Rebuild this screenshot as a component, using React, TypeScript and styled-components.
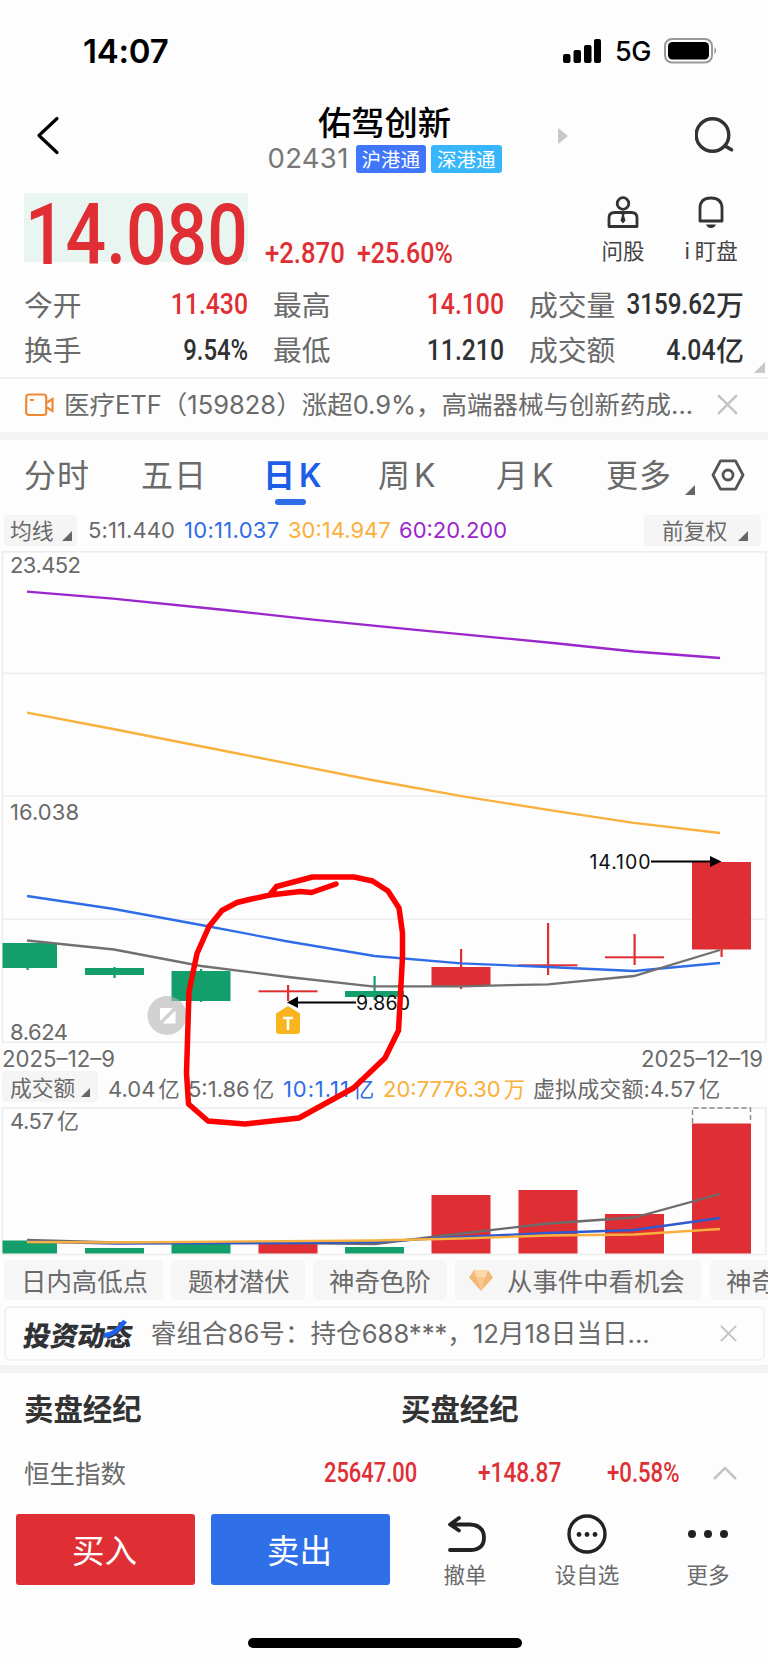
import React from "react";
import styled, { createGlobalStyle } from "styled-components";

const CJK = `"Noto Sans CJK SC", sans-serif`;
const UI = `Inter, ${CJK}`;
const DIN = `Roboto, ${CJK}`;

const RED = "#df2f34";
const GREEN = "#139e6c";
const BLUE = "#2f6de8";
const ORANGE = "#f9b03c";
const PURPLE = "#9a26cc";
const GREY = "#6a6a6a";
const INK = "#303133";

const Global = createGlobalStyle`
  * { box-sizing: border-box; }
  body { margin: 0; background: #fdfdfd; }
`;

const Screen = styled.main`
  position: relative;
  width: 768px;
  height: 1664px;
  overflow: hidden;
  display: flex;
  flex-direction: column;
  background: #fdfdfd;
  font-family: ${UI};
  color: ${GREY};
  white-space: nowrap;
  line-height: 1;
`;

const StatusBar = styled.div`
  height: 102px;
  padding: 0 50px 0 83px;
  display: flex;
  justify-content: space-between;
  align-items: center;
  color: #000;
`;
const Clock = styled.span`
  font-size: 33px;
  font-weight: 600;
  letter-spacing: -0.2px;
`;
const StatusRight = styled.div`
  display: flex;
  align-items: center;
`;
const Network = styled.span`
  width: 49px;
  margin-left: 13px;
  font-size: 27px;
  font-weight: 500;
  letter-spacing: -0.4px;
`;

const Header = styled.header`
  height: 82px;
  padding: 0 31px 0 36px;
  display: grid;
  grid-template-columns: 232px 233px 1fr 42px;
`;
const Back = styled.svg`
  margin-top: 13px;
`;
const TitleBlock = styled.div`
  display: flex;
  flex-direction: column;
  align-items: center;
`;
const Title = styled.h1`
  margin: 2px 0 0;
  font: 500 33.3px/34px ${CJK};
  color: #000;
`;
const CodeLine = styled.div`
  margin-top: 7px;
  width: 234px;
  height: 28px;
  display: flex;
  align-items: center;
  gap: 5px;
`;
const Code = styled.span`
  width: 83px;
  font-size: 27.5px;
  font-weight: 400;
  letter-spacing: 0.3px;
  color: #777;
`;
const Tag = styled.span<{ $bg: string }>`
  width: 70.5px;
  height: 28px;
  border-radius: 3px;
  background: ${(p) => p.$bg};
  color: #fff;
  font: 400 19.5px/27px ${CJK};
  text-align: center;
`;

/* Narrow numerals: a grotesque squeezed to DIN proportions. */
const Num = styled.span<{ $size: number; $x?: number; $color?: string; $from?: string }>`
  display: inline-block;
  font-family: ${DIN};
  font-weight: 500;
  font-size: ${(p) => p.$size}px;
  line-height: 1;
  color: ${(p) => p.$color || RED};
  transform: scaleX(${(p) => p.$x || 0.84});
  transform-origin: ${(p) => p.$from || "left"} center;
`;

const Quote = styled.section`
  height: 95px;
  padding: 9px 24px 0 24px;
  display: flex;
`;
const PriceBox = styled.div`
  width: 224px;
  height: 69px;
  padding: 0 0 0 1px;
  display: flex;
  align-items: flex-start;
  background: #e9f5f1;
  line-height: 1;
  ${Num} {
    margin-top: 0.5px;
  }
`;
const Change = styled.div`
  width: 92px;
  margin-left: 17px;
  padding-top: 46px;
  & + & {
    margin-left: 0;
    width: 240px;
  }
`;
const Tool = styled.div<{ $w: number; $ml: number }>`
  width: ${(p) => p.$w}px;
  margin-left: ${(p) => p.$ml}px;
  display: flex;
  flex-direction: column;
  align-items: center;
  font: 400 21.5px/24px ${CJK};
  color: #444;
  svg {
    margin: 3px 0 9px;
  }
`;

const Stats = styled.section`
  position: relative;
  height: 100px;
  padding: 2px 24px 0 24px;
  display: grid;
  grid-template-columns: 224px 231px 215px;
  column-gap: 25px;
  grid-auto-rows: 45.5px;
  align-content: start;
  border-bottom: 2px solid #f1f1f1;
`;
const Stat = styled.div`
  display: flex;
  justify-content: space-between;
  align-items: center;
`;
const StatLabel = styled.span`
  font: 400 28.8px/40px ${CJK};
`;
const StatValue = styled.span`
  display: flex;
  align-items: center;
  justify-content: flex-end;
  width: 0;
  padding-top: 2px;
`;
const Unit = styled.span`
  margin-top: -2px;
  font: 500 28px/40px ${CJK};
  color: ${INK};
`;
const Corner = styled.svg`
  position: absolute;
  right: 3px;
  bottom: 4px;
`;

const Ticker = styled.div`
  height: 53px;
  padding: 0 30px 2px 25px;
  display: flex;
  align-items: center;
`;
const TickerText = styled.span`
  width: 653px;
  margin-left: 10px;
  font-size: 25.5px;
  line-height: 40px;
`;
const Band = styled.div<{ $h: number }>`
  height: ${(p) => p.$h}px;
  background: #f3f3f3;
`;

const Tabs = styled.nav`
  height: 73px;
  padding: 0 22px 0 24px;
  display: flex;
`;
const Tab = styled.div<{ $w: number; $on?: boolean }>`
  width: ${(p) => p.$w}px;
  display: flex;
  flex-direction: column;
  font-size: 32px;
  letter-spacing: 1px;
  line-height: 44px;
  padding-top: 14px;
  font-weight: ${(p) => (p.$on ? 600 : 400)};
  color: ${(p) => (p.$on ? "#1d5de8" : GREY)};
`;
const Kay = styled.span`
  margin-left: 3px;
`;
const Underline = styled.i`
  width: 31px;
  height: 6px;
  margin: 1px 0 0 12px;
  border-radius: 3px;
  background: ${BLUE};
`;
const TabArrow = styled.div`
  width: 26px;
  padding-top: 41px;
`;
const Settings = styled.svg`
  margin-top: 19px;
`;

const LegendRow = styled.div<{ $h: number; $lift?: number }>`
  height: ${(p) => p.$h}px;
  padding: 0 7px ${(p) => p.$lift || 0}px 0;
  display: flex;
  align-items: center;
`;
const Picker = styled.div<{ $w: number; $ml: number; $pl: number; $gap: number; $mb?: number }>`
  width: ${(p) => p.$w}px;
  height: 31px;
  margin: 0 0 ${(p) => p.$mb || 0}px ${(p) => p.$ml}px;
  padding-left: ${(p) => p.$pl}px;
  display: flex;
  align-items: center;
  gap: ${(p) => p.$gap}px;
  border-radius: 4px;
  background: #f5f5f5;
  font: 400 21.8px/30px ${CJK};
  svg {
    margin-top: 12px;
  }
`;
const Legend = styled.span<{ $w: number; $color?: string; $ls?: number }>`
  width: ${(p) => p.$w}px;
  font-size: 22px;
  line-height: 30px;
  letter-spacing: ${(p) => p.$ls || 0}px;
  color: ${(p) => p.$color || GREY};
`;
const Yi = styled.span`
  margin-left: 3px;
  font: 400 21.5px/30px ${CJK};
`;
const LegendGap = styled.span<{ $w: number }>`
  width: ${(p) => p.$w}px;
`;

const ChartArea = styled.section`
  position: relative;
  height: 705px;
`;
const Plot = styled.svg`
  display: block;
  text {
    font-family: ${UI};
    font-size: 22px;
    fill: ${GREY};
  }
  text.mark {
    font-size: 19.5px;
    fill: #111;
  }
`;
const Dates = styled.div`
  height: 27px;
  padding: 3px 5px 0 2px;
  display: flex;
  justify-content: space-between;
  font-size: 22.2px;
  line-height: 26px;
`;
const Scribble = styled.svg`
  position: absolute;
  left: 0;
  top: 0;
`;

const Chips = styled.div`
  height: 44px;
  padding: 4px 0 0 4px;
  display: flex;
  gap: 8px;
  overflow: hidden;
`;
const Chip = styled.div<{ $w: number; $pl: number }>`
  flex: none;
  width: ${(p) => p.$w}px;
  height: 40px;
  padding-left: ${(p) => p.$pl}px;
  display: flex;
  align-items: center;
  border-radius: 5px;
  background: #f6f6f6;
  font: 400 25.4px/36px ${CJK};
  svg {
    margin-right: 14px;
  }
`;
const Feed = styled.div`
  height: 55px;
  margin: 6px 3px 4px 4px;
  padding: 0 26px 0 18px;
  display: flex;
  align-items: center;
  border: 2px solid #f2f2f2;
  border-radius: 6px;
`;
const FeedLogo = styled.span`
  position: relative;
  width: 110px;
  font: 900 27.4px/40px ${CJK};
  letter-spacing: -0.3px;
  color: #303236;
  transform: skewX(-9deg);
`;
const Stroke = styled.svg`
  position: absolute;
  left: 80px;
  top: 5px;
`;
const FeedText = styled.span`
  width: 570px;
  margin-left: 17px;
  font-size: 25.6px;
  line-height: 40px;
`;

const Brokers = styled.section`
  height: 69px;
  padding-left: 24px;
  display: grid;
  grid-template-columns: 377px 1fr;
  align-items: center;
  font: 700 29.4px/69px ${CJK};
  color: #333;
`;
const IndexRow = styled.div`
  height: 62px;
  padding: 0 31px 0 24px;
  display: flex;
  align-items: center;
`;
const IndexName = styled.span`
  width: 300px;
  padding-bottom: 2px;
  font: 400 25.5px/40px ${CJK};
`;
const IndexCell = styled.span<{ $w: number }>`
  width: ${(p) => p.$w}px;
`;

const Actions = styled.footer`
  height: 134px;
  padding: 10px 0 0 16px;
  display: flex;
  align-items: flex-start;
`;
const Trade = styled.button<{ $bg: string }>`
  width: 179px;
  height: 71px;
  margin: 0 16px 0 0;
  padding: 0 2px 2px 0;
  border: 0;
  border-radius: 3px;
  background: ${(p) => p.$bg};
  color: #fff;
  font: 400 32.5px/68px ${CJK};
`;
const Action = styled.div<{ $w: number }>`
  width: ${(p) => p.$w}px;
  display: flex;
  flex-direction: column;
  align-items: center;
  font: 400 21.5px/30px ${CJK};
  svg {
    margin-bottom: 5px;
  }
`;
const HomeBar = styled.div`
  width: 274px;
  height: 10px;
  margin-left: 248px;
  border-radius: 5px;
  background: #000;
`;

const Wedge = ({ s = 10, color = "#666" }: { s?: number; color?: string }) => (
  <svg width={s} height={s} viewBox="0 0 10 10">
    <path d="M10 0V10H0Z" fill={color} />
  </svg>
);
const Close = ({ s }: { s: number }) => (
  <svg width={s} height={s} viewBox="0 0 20 20" stroke="#c4c4c4" strokeWidth="2.400">
    <path d="M1 1L19 19M19 1L1 19" />
  </svg>
);

type Candle = { x: number; top: number; bottom: number; hi: number; lo: number; up?: boolean; vol: number };
const candles: Candle[] = [
  { x: 27.5, top: 392, bottom: 417, hi: 392, lo: 419, vol: 133.5 },
  { x: 114.5, top: 417, bottom: 424, hi: 416, lo: 427, vol: 141 },
  { x: 201, top: 420, bottom: 450, hi: 418, lo: 451, vol: 136 },
  { x: 288, top: 439.3, bottom: 441.3, hi: 434, lo: 450, up: true, vol: 136.5 },
  { x: 374.5, top: 440, bottom: 446, hi: 425, lo: 449, vol: 140 },
  { x: 461, top: 416, bottom: 435, hi: 398, lo: 438, up: true, vol: 88 },
  { x: 548, top: 413.3, bottom: 415.3, hi: 372, lo: 424, up: true, vol: 83 },
  { x: 634.5, top: 405.3, bottom: 407.3, hi: 383, lo: 414, up: true, vol: 107 },
  { x: 721.5, top: 311, bottom: 398.5, hi: 311, lo: 406, up: true, vol: 16.5 },
];
const barX = (c: Candle) => Math.max(2.5, c.x - 29.5);
const barW = (c: Candle) => c.x + 29.5 - barX(c);

const PriceChart = () => (
  <Plot width="768" height="492" viewBox="0 0 768 492">
    <g stroke="#ededed" strokeWidth="1.6" fill="none">
      <rect x="2.5" y="0.8" width="763.5" height="490.4" />
      <path d="M2 122.4H766M2 245.2H766M2 368.3H766" />
    </g>
    {candles.map((c) => (
      <g key={c.x} fill={c.up ? RED : GREEN}>
        <rect x={barX(c)} y={c.top} width={barW(c)} height={c.bottom - c.top} />
        <rect x={c.x - 1} y={c.hi} width="2.2" height={c.lo - c.hi} />
      </g>
    ))}
    <g fill="none" strokeWidth="2.300">
      <path stroke={PURPLE} d="M27 40.7L113 47.7L225 59L313 68.7L421 79.3L553 92L634 100.5L720 107" />
      <path stroke={ORANGE} d="M27 161.7L113 178L230 201L372 229L463 245.3L553 259.7L632 271.7L720 282" />
      <path stroke={BLUE} d="M27 345L114 358L201 374L288 390.5L374.5 405L461 412.3L548 416L634 420L720 412" />
      <path stroke="#707070" d="M27 389.5L114 398.5L201 415L288 426L372 435.3L461 435.3L548 433.3L634 425L720 399" />
    </g>
    <g fill="#000">
      <rect x="651" y="309.5" width="61" height="2" />
      <path d="M710 305L721.500 310.500L710 316Z" />
      <rect x="296" y="450.500" width="60" height="2" />
      <path d="M298 445.500L287 451.500L298 457Z" />
    </g>
    <text className="mark" x="589.500" y="317.500" textLength="61">14.100</text>
    <text className="mark" x="356" y="459" textLength="54">9.860</text>
    <g>
      <path d="M288 455L300 462.500V480Q300 483 297 483H279Q276 483 276 480V462.500Z" fill="#f8b51e" />
      <path d="M283 467H293M288 467V479" stroke="#fff" strokeWidth="2.600" />
    </g>
    <circle cx="167" cy="464.500" r="19.500" fill="#b4b4b4" fillOpacity="0.6" />
    <path d="M160 457H173L160 470ZM175.500 459.500V472.500H162.500Z" fill="#fff" />
    <text x="10" y="22" textLength="71">23.452</text>
    <text x="10" y="269" textLength="69">16.038</text>
    <text x="10" y="488.500" textLength="58">8.624</text>
  </Plot>
);

const VolumeChart = () => (
  <Plot width="768" height="149" viewBox="0 0 768 149">
    <rect x="2.5" y="1" width="763.500" height="146.500" stroke="#ededed" strokeWidth="1.600" fill="none" />
    {candles.map((c) => (
      <rect key={c.x} x={barX(c)} y={c.vol} width={barW(c)} height={146.5 - c.vol} fill={c.up ? RED : GREEN} />
    ))}
    <path d="M692.500 16V1H750.500V16" fill="none" stroke="#888" strokeWidth="1.400" strokeDasharray="5 3" />
    <g fill="none" strokeWidth="2.300">
      <path stroke="#6c6c6c" d="M27 133L115 135.500L201 136L288 136L375 137L440 129L548 116.500L634 110.500L720 87" />
      <path stroke="#2f59cc" d="M27 134.500L115 136.500L288 136L375 135L440 131L548 126L634 123L720 111" />
      <path stroke={ORANGE} d="M27 135L115 135.500L375 133.500L461 131.500L548 128.500L634 127.500L720 122" />
    </g>
    <text x="10" y="22" textLength="44">4.57</text>
    <text x="57" y="22">亿</text>
  </Plot>
);

const App = () => (
  <>
    <Global />
    <Screen>
      <StatusBar>
        <Clock>14:07</Clock>
        <StatusRight>
          <svg width="40" height="26" viewBox="0 0 40 26">
            <rect x="1" y="16" width="7.500" height="9" rx="2" />
            <rect x="11.500" y="12" width="7.500" height="13" rx="2" />
            <rect x="22" y="7" width="7.500" height="18" rx="2" />
            <rect x="32" y="1" width="7" height="24" rx="2" />
          </svg>
          <Network>5G</Network>
          <svg width="54" height="26" viewBox="0 0 54 26">
            <rect x="1" y="1" width="47" height="23.500" rx="7" fill="none" stroke="#999" strokeWidth="2" />
            <rect x="4" y="4" width="41" height="17.500" rx="4.500" />
            <path d="M50.500 9Q53.500 12.700 50.500 16.500Z" fill="#888" />
          </svg>
        </StatusRight>
      </StatusBar>

      <Header>
        <Back width="24" height="42" viewBox="0 0 24 42" fill="none" stroke="#000" strokeWidth="3.200" strokeLinecap="round" strokeLinejoin="round">
          <path d="M21 3.500L3 20.500L21 37.500" />
        </Back>
        <TitleBlock>
          <Title>佑驾创新</Title>
          <CodeLine>
            <Code>02431</Code>
            <Tag $bg="#4076fb">沪港通</Tag>
            <Tag $bg="#38b6fc">深港通</Tag>
          </CodeLine>
        </TitleBlock>
        <svg width="70" height="44" viewBox="0 0 70 44">
          <path d="M57 26V42L67 34Z" fill="#c8c8c8" />
        </svg>
        <svg width="42" height="54" viewBox="0 0 42 54" fill="none" stroke="#333" strokeWidth="3.400" strokeLinecap="round">
          <circle cx="17.500" cy="33" r="16.300" />
          <path d="M31 44.500L36.500 47.800" />
        </svg>
      </Header>

      <Quote>
        <PriceBox>
          <Num $size={84.5} $x={0.845}>14.080</Num>
        </PriceBox>
        <Change>
          <Num $size={29} $x={0.885}>+2.870</Num>
        </Change>
        <Change>
          <Num $size={29} $x={0.86}>+25.60%</Num>
        </Change>
        <Tool $w={44} $ml={4}>
          <svg width="32" height="33" viewBox="0 0 32 33" fill="none" stroke="#333" strokeWidth="2.800">
            <circle cx="16" cy="7.500" r="5.800" />
            <path d="M2 30.500V22Q2 16.500 7.500 16.500H24.500Q30 16.500 30 22V30.500Z" strokeLinejoin="round" />
            <path d="M14 17.500H18L17 19.500L18.500 24.500L16 27.500L13.500 24.500L15 19.500Z" fill="#333" stroke="none" />
          </svg>
          问股
        </Tool>
        <Tool $w={52} $ml={40}>
          <svg width="28" height="33" viewBox="0 0 28 33" fill="none" stroke="#333" strokeWidth="2.800">
            <path d="M3 25V12.500Q3 2 14 2Q25 2 25 12.500V25Z" strokeLinejoin="round" />
            <path d="M9 28.500H19Q17.500 32 14 32Q10.500 32 9 28.500Z" fill="#333" stroke="none" />
          </svg>
          i 盯盘
        </Tool>
      </Quote>

      <Stats>
        <Stat><StatLabel>今开</StatLabel><StatValue><Num $size={29.5} $from="right">11.430</Num></StatValue></Stat>
        <Stat><StatLabel>最高</StatLabel><StatValue><Num $size={29.5} $from="right">14.100</Num></StatValue></Stat>
        <Stat><StatLabel>成交量</StatLabel><StatValue><Num $size={29.5} $x={0.82} $from="right" $color={INK}>3159.62</Num><Unit>万</Unit></StatValue></Stat>
        <Stat><StatLabel>换手</StatLabel><StatValue><Num $size={29.5} $x={0.81} $from="right" $color={INK}>9.54%</Num></StatValue></Stat>
        <Stat><StatLabel>最低</StatLabel><StatValue><Num $size={29.5} $from="right" $color={INK}>11.210</Num></StatValue></Stat>
        <Stat><StatLabel>成交额</StatLabel><StatValue><Num $size={29.5} $from="right" $color={INK}>4.04</Num><Unit>亿</Unit></StatValue></Stat>
        <Corner width="11" height="11" viewBox="0 0 10 10"><path d="M10 0V10H0Z" fill="#c8c8c8" /></Corner>
      </Stats>

      <Ticker>
        <svg width="29" height="24" viewBox="0 0 29 24" fill="none" stroke="#ee8a35" strokeWidth="2.200">
          <rect x="1.200" y="1.500" width="20" height="20.500" rx="2.500" />
          <path d="M22 9.500L27.500 6V18L22 14.500M5 7H9" />
        </svg>
        <TickerText>医疗ETF（159828）涨超0.9%，高端器械与创新药成...</TickerText>
        <Close s={21} />
      </Ticker>
      <Band $h={8} />

      <Tabs>
        <Tab $w={117}>分时</Tab>
        <Tab $w={122}>五日</Tab>
        <Tab $w={115} $on><span>日<Kay>K</Kay></span><Underline /></Tab>
        <Tab $w={118}><span>周<Kay>K</Kay></span></Tab>
        <Tab $w={110}><span>月<Kay>K</Kay></span></Tab>
        <Tab $w={79}>更多</Tab>
        <TabArrow><Wedge /></TabArrow>
        <Settings width="34" height="32" viewBox="0 0 34 32" fill="none" stroke="#555" strokeWidth="2.800" strokeLinejoin="round">
          <path d="M9.500 1.800H24.500L32 16L24.500 30.200H9.500L2 16Z" />
          <circle cx="17" cy="16" r="5" />
        </Settings>
      </Tabs>

      <LegendRow $h={38} $lift={4}>
        <Picker $w={73} $ml={4} $pl={6} $gap={8}>均线<Wedge /></Picker>
        <LegendGap $w={11} />
        <Legend $w={96} $ls={0.1}>5:11.440</Legend>
        <Legend $w={104} $ls={0.3} $color={BLUE}>10:11.037</Legend>
        <Legend $w={111} $color={ORANGE}>30:14.947</Legend>
        <Legend $w={106} $color={PURPLE}>60:20.200</Legend>
        <LegendGap $w={139} />
        <Picker $w={117} $ml={0} $pl={18} $gap={11}>前复权<Wedge /></Picker>
      </LegendRow>

      <ChartArea>
        <PriceChart />
        <Dates>
          <span>2025–12–9</span>
          <span>2025–12–19</span>
        </Dates>
        <LegendRow $h={37}>
          <Picker $w={96} $ml={2} $pl={8} $gap={6} $mb={4}>成交额<Wedge s={9} /></Picker>
          <LegendGap $w={10} />
          <Legend $w={80}>4.04<Yi>亿</Yi></Legend>
          <Legend $w={95}>5:1.86<Yi>亿</Yi></Legend>
          <Legend $w={100} $ls={0.9} $color={BLUE}>10:1.11<Yi>亿</Yi></Legend>
          <Legend $w={150} $color={ORANGE}>20:7776.30<Yi>万</Yi></Legend>
          <Legend $w={190} $ls={0.1}>虚拟成交额:4.57<Yi>亿</Yi></Legend>
        </LegendRow>
        <VolumeChart />
        <Scribble width="768" height="705" viewBox="0 551 768 705" fill="none" stroke="#fe0000" strokeWidth="5.500" strokeLinecap="round" strokeLinejoin="round">
          <path d="M336 884L311.500 892.500L300.500 891.500L270 895L251.500 899L237 902.500L222 910.500L209 926.500L197 953.500L189 991.500L186.500 1073L188.500 1104L208 1121L245 1124L299 1118L353.500 1088L385 1058L398.500 1030.500L402.500 957V933L399 908L388 891L372.500 881L354 877H312.500L276.500 886.500L270.500 894" />
        </Scribble>
      </ChartArea>

      <Chips>
        <Chip $w={159} $pl={17}>日内高低点</Chip>
        <Chip $w={134} $pl={17}>题材潜伏</Chip>
        <Chip $w={134} $pl={16}>神奇色阶</Chip>
        <Chip $w={247} $pl={14}>
          <svg width="24" height="21" viewBox="0 0 24 21">
            <path d="M5 0H19L24 7.500L12 21L0 7.500Z" fill="#f3b878" />
            <path d="M5 0H19L16.500 7.500H7.500Z" fill="#fbd9a8" />
            <path d="M7.500 7.500H16.500L12 21Z" fill="#f7c78e" />
          </svg>
          从事件中看机会
        </Chip>
        <Chip $w={134} $pl={16}>神奇九转</Chip>
      </Chips>

      <Feed>
        <FeedLogo>
          投资动态
          <Stroke width="32" height="24" viewBox="0 0 32 24">
            <path d="M19 2Q15 9 10 13Q6 16 0 16.500" fill="none" stroke="#1f62ee" strokeWidth="5" />
          </Stroke>
        </FeedLogo>
        <FeedText>睿组合86号：持仓688***，12月18日当日...</FeedText>
        <Close s={17} />
      </Feed>
      <Band $h={8} />

      <Brokers>
        <span>卖盘经纪</span>
        <span>买盘经纪</span>
      </Brokers>
      <IndexRow>
        <IndexName>恒生指数</IndexName>
        <IndexCell $w={154}><Num $size={27} $x={0.81}>25647.00</Num></IndexCell>
        <IndexCell $w={129}><Num $size={27}>+148.87</Num></IndexCell>
        <IndexCell $w={106}><Num $size={27} $x={0.82}>+0.58%</Num></IndexCell>
        <svg width="24" height="14" viewBox="0 0 24 14" fill="none" stroke="#c4c4c4" strokeWidth="2.500">
          <path d="M1 13L12 2L23 13" />
        </svg>
      </IndexRow>

      <Actions>
        <Trade $bg={RED}>买入</Trade>
        <Trade $bg="#2f6fe8">卖出</Trade>
        <Action $w={118}>
          <svg width="42" height="40" viewBox="-2 0 42 40" fill="none" stroke="#222" strokeWidth="3.800" strokeLinecap="round" strokeLinejoin="round">
            <path d="M13 4L4 10.500L13 16.500M5 10.500H24Q38 11.500 38 23.500Q38 36 24 36H4" />
          </svg>
          撤单
        </Action>
        <Action $w={126}>
          <svg width="42" height="40" viewBox="0 0 42 40">
            <circle cx="21" cy="20" r="18" fill="none" stroke="#222" strokeWidth="3.400" />
            <circle cx="13" cy="20.500" r="2.400" fill="#222" />
            <circle cx="21" cy="20.500" r="2.400" fill="#222" />
            <circle cx="29" cy="20.500" r="2.400" fill="#222" />
          </svg>
          设自选
        </Action>
        <Action $w={116}>
          <svg width="42" height="40" viewBox="0 0 42 40" fill="#222">
            <circle cx="5" cy="20" r="4" />
            <circle cx="21" cy="20" r="4" />
            <circle cx="37" cy="20" r="4" />
          </svg>
          更多
        </Action>
      </Actions>
      <HomeBar />
    </Screen>
  </>
);

export default App;
